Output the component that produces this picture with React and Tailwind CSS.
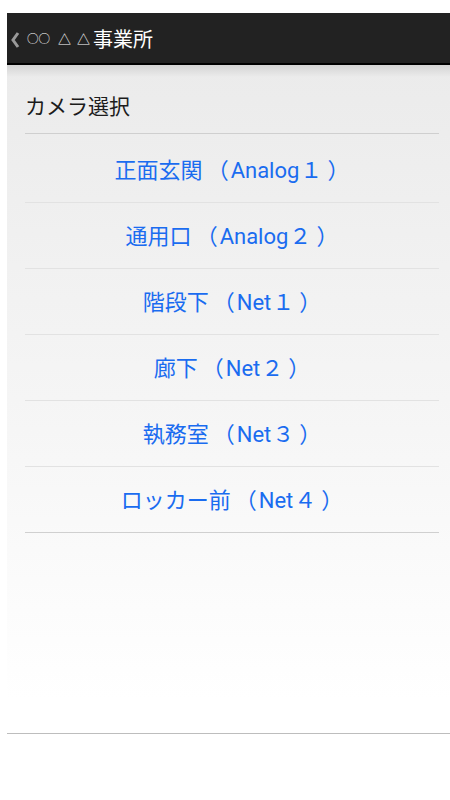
import React from 'react';

const cameras = [
  ['正面玄関', 'Analog', '１'],
  ['通用口', 'Analog', '２'],
  ['階段下', 'Net', '１'],
  ['廊下', 'Net', '２'],
  ['執務室', 'Net', '３'],
  ['ロッカー前', 'Net', '４'],
];

const font = { fontFamily: 'Roboto, "Noto Sans CJK JP", sans-serif' };

function BackChevron() {
  return (
    <svg width="10" height="18" viewBox="0 0 10 18" className="shrink-0">
      <path d="M8 2 L3 9 L8 16" fill="none" stroke="#9a9a9a" strokeWidth="3" strokeLinejoin="miter" />
    </svg>
  );
}

export default function App() {
  return (
    <div className="w-[450px] h-[800px] bg-white pt-[13px] pl-[7px]" style={font}>
      <header className="h-[52px] bg-[#222222] border-b-2 border-black flex items-center text-white pt-[3px]">
        <span className="ml-[3px]">
          <BackChevron />
        </span>
        <span className="ml-[7px] text-[11.5px] leading-none">○○</span>
        <span className="ml-[8px] text-[13px] leading-none tracking-[6px]">△△</span>
        <span className="ml-[-3px] text-[20px] leading-none">事業所</span>
      </header>

      <main className="relative h-[669px] bg-gradient-to-b from-[#ebebeb] via-[#f5f5f5] to-white to-95% border-b border-[#bdbdbd]">
        <div className="absolute inset-x-0 top-0 h-[12px] bg-gradient-to-b from-[#d4d4d4] to-transparent pointer-events-none" />
        <div className="relative pl-[18px] pr-[11px]">
          <div className="h-[69px] flex items-end border-b border-[#cfcfcf] text-[21px] text-[#1c1c1c] pb-[10px]">
            カメラ選択
          </div>
          <ul>
            {cameras.map(([name, kind, num], i) => (
              <li
                key={name}
                className={
                  'flex items-center justify-center text-[22px] text-[#1a6cf0] border-b ' +
                  (i === 0 ? 'h-[69px] pt-[4px] ' : 'h-[66px] pt-[1px] ') +
                  (i === cameras.length - 1 ? 'border-[#d0d0d0]' : 'border-[#e2e2e2]')
                }
              >
                <span>{name}</span>
                <span className="ml-[4px] mr-[2px]">（</span>
                <span>{kind}</span>
                <span className="ml-[1px]">{num}</span>
                <span className="ml-[5px]">）</span>
              </li>
            ))}
          </ul>
        </div>
      </main>
    </div>
  );
}
